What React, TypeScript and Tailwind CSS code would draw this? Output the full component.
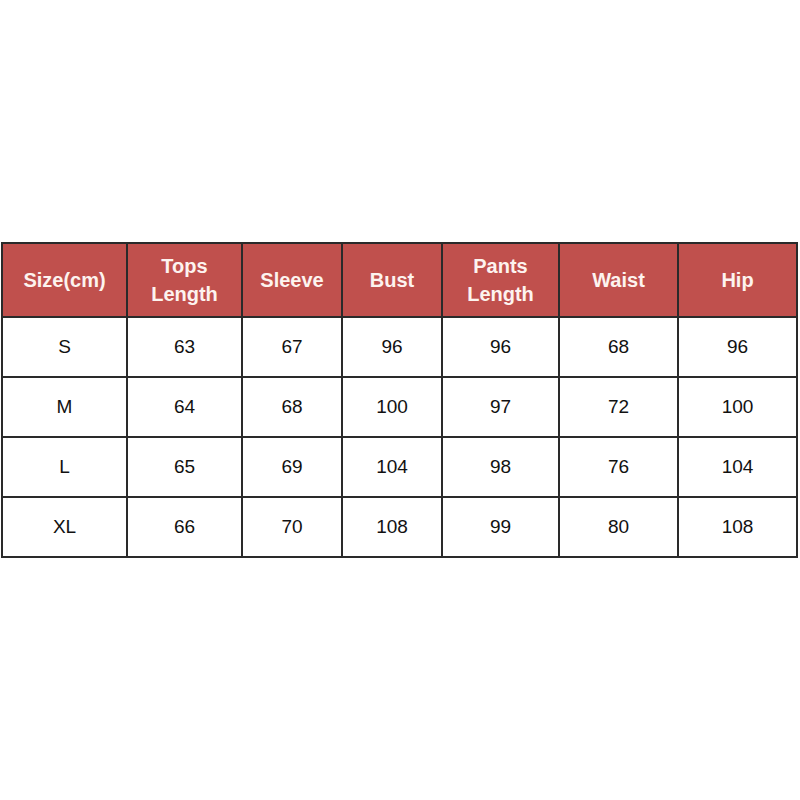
const headers = [
  ["Size(cm)"],
  ["Tops", "Length"],
  ["Sleeve"],
  ["Bust"],
  ["Pants", "Length"],
  ["Waist"],
  ["Hip"],
];

const rows = [
  ["S", "63", "67", "96", "96", "68", "96"],
  ["M", "64", "68", "100", "97", "72", "100"],
  ["L", "65", "69", "104", "98", "76", "104"],
  ["XL", "66", "70", "108", "99", "80", "108"],
];

const widths = ["w-[125px]", "w-[115px]", "w-[100px]", "w-[100px]", "w-[117px]", "w-[119px]", "w-[119px]"];

export default function App() {
  return (
    <div className="h-[800px] w-[800px] bg-white flex items-center pl-[1px] font-['Liberation_Sans',Arial,sans-serif]">
      <table className="w-[796px] table-fixed border-collapse">
        <colgroup>
          {widths.map((w, i) => (
            <col key={i} className={w} />
          ))}
        </colgroup>
        <thead>
          <tr className="h-[74px] bg-[#c0504d]">
            {headers.map((h, i) => (
              <th
                key={i}
                className="border-2 border-[#2a2a2a] text-[#fdf3ef] text-[20px] font-bold leading-[28px] text-center align-middle p-0"
              >
                {h.map((line) => (
                  <div key={line}>{line}</div>
                ))}
              </th>
            ))}
          </tr>
        </thead>
        <tbody>
          {rows.map((r, ri) => (
            <tr key={ri} className="h-[60px]">
              {r.map((c, ci) => (
                <td
                  key={ci}
                  className="border-2 border-[#2a2a2a] text-[#111] text-[19px] text-center align-middle p-0"
                >
                  {c}
                </td>
              ))}
            </tr>
          ))}
        </tbody>
      </table>
    </div>
  );
}
